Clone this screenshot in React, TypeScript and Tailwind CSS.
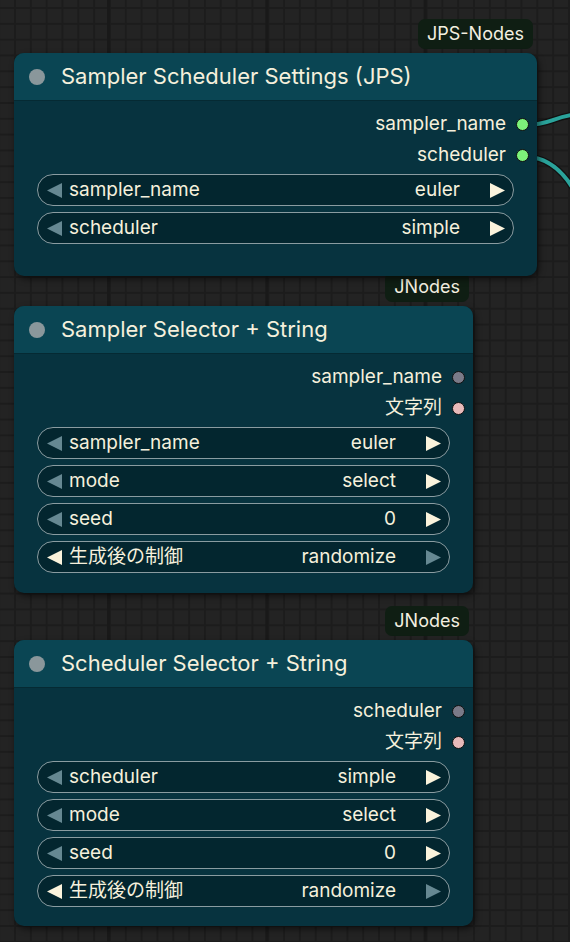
import React from "react"

type Output = { name: string; color: string }
type Widget = { label: string; value: string; leftOn?: boolean; rightOn?: boolean }

type NodeProps = {
  badge: string
  title: string
  width: string
  outputs: Output[]
  widgets: Widget[]
  bottomPad: string
}

const font = "font-['Inter','Noto_Sans_CJK_JP',sans-serif]"

function Arrow({ dir, on }: { dir: "left" | "right"; on: boolean }) {
  const fill = on ? "#fbf3dc" : "#668892"
  return (
    <svg width="15" height="15" viewBox="0 0 15 15" className="shrink-0">
      {dir === "left" ? (
        <polygon points="15,0 15,15 0,7.5" fill={fill} />
      ) : (
        <polygon points="0,0 0,15 15,7.5" fill={fill} />
      )}
    </svg>
  )
}

function WidgetRow({ w }: { w: Widget }) {
  return (
    <div className="flex h-[32px] items-center rounded-full border-[1.5px] border-[#8a9ca1] bg-[#03262f] pl-[9px] pr-[8px]">
      <Arrow dir="left" on={!!w.leftOn} />
      <span className="ml-[7px] flex-1 truncate">{w.label}</span>
      <span>{w.value}</span>
      <span className="ml-[30px] flex">
        <Arrow dir="right" on={w.rightOn !== false} />
      </span>
    </div>
  )
}

function Node({ badge, title, width, outputs, widgets, bottomPad }: NodeProps) {
  return (
    <div className={width}>
      <div className="flex justify-end pr-[4px]">
        <div className="flex h-[30px] items-center rounded-[7px] bg-[#0f1e13] px-[9px] text-[18px] leading-none text-[#f3efe0]">
          {badge}
        </div>
      </div>
      <div className="relative z-10 mt-[4px] overflow-hidden rounded-[10px] bg-[#07333f] shadow-[2px_3px_6px_rgba(0,0,0,0.55)]">
        <div className="flex h-[48px] items-center border-b border-[#052a33] bg-[#0a4553] pl-[15px]">
          <span className="h-[16px] w-[16px] rounded-full bg-[#8a979b]" />
          <span className="ml-[16px] text-[22px] text-[#f5f0dc]">{title}</span>
        </div>
        <div className={`pt-[8px] ${bottomPad}`}>
          {outputs.map((o) => (
            <div key={o.name} className="flex h-[31px] items-center justify-end pr-[8px] text-[19px]">
              <span>{o.name}</span>
              <span
                className="ml-[10px] h-[13px] w-[13px] rounded-full border-[1.5px] border-[#101010]"
                style={{ backgroundColor: o.color }}
              />
            </div>
          ))}
          <div className="mx-[23px] mt-[3px] flex flex-col gap-[6px] text-[19px]">
            {widgets.map((w) => (
              <WidgetRow key={w.label} w={w} />
            ))}
          </div>
        </div>
      </div>
    </div>
  )
}

export default function App() {
  return (
    <div
      className={`relative h-[942px] w-[570px] overflow-hidden bg-[#232323] text-[#f5f0dc] ${font} [background-image:linear-gradient(to_right,#191919_3px,transparent_3px),linear-gradient(to_right,#1c1c1c_1.5px,transparent_1.5px),linear-gradient(to_bottom,#1c1c1c_1.5px,transparent_1.5px)] [background-size:158.3px_100%,15.83px_100%,100%_15.83px] [background-position:107px_0,14px_0,0_7px]`}
    >
      <svg className="absolute inset-0" width="570" height="942">
        <path d="M526 125 C548 125 552 118 572 115" stroke="#111" strokeWidth="6.5" fill="none" />
        <path d="M526 125 C548 125 552 118 572 115" stroke="#2aa39b" strokeWidth="4" fill="none" />
        <path d="M526 157 C546 157 562 170 574 190" stroke="#111" strokeWidth="6.5" fill="none" />
        <path d="M526 157 C546 157 562 170 574 190" stroke="#2aa39b" strokeWidth="4" fill="none" />
      </svg>
      <div className="relative flex flex-col pl-[14px] pt-[19px]">
        <Node
          badge="JPS-Nodes"
          title="Sampler Scheduler Settings (JPS)"
          width="w-[523px]"
          bottomPad="pb-[32px]"
          outputs={[
            { name: "sampler_name", color: "#7df27a" },
            { name: "scheduler", color: "#7df27a" },
          ]}
          widgets={[
            { label: "sampler_name", value: "euler" },
            { label: "scheduler", value: "simple" },
          ]}
        />
        <div className="-mt-[4px]">
          <Node
            badge="JNodes"
            title="Sampler Selector + String"
            width="w-[459px]"
            bottomPad="pb-[20px]"
            outputs={[
              { name: "sampler_name", color: "#7a7a88" },
              { name: "文字列", color: "#e8baba" },
            ]}
            widgets={[
              { label: "sampler_name", value: "euler" },
              { label: "mode", value: "select" },
              { label: "seed", value: "0" },
              { label: "生成後の制御", value: "randomize", leftOn: true, rightOn: false },
            ]}
          />
        </div>
        <div className="mt-[13px]">
          <Node
            badge="JNodes"
            title="Scheduler Selector + String"
            width="w-[459px]"
            bottomPad="pb-[19px]"
            outputs={[
              { name: "scheduler", color: "#7a7a88" },
              { name: "文字列", color: "#e8baba" },
            ]}
            widgets={[
              { label: "scheduler", value: "simple" },
              { label: "mode", value: "select" },
              { label: "seed", value: "0" },
              { label: "生成後の制御", value: "randomize", leftOn: true, rightOn: false },
            ]}
          />
        </div>
      </div>
    </div>
  )
}
